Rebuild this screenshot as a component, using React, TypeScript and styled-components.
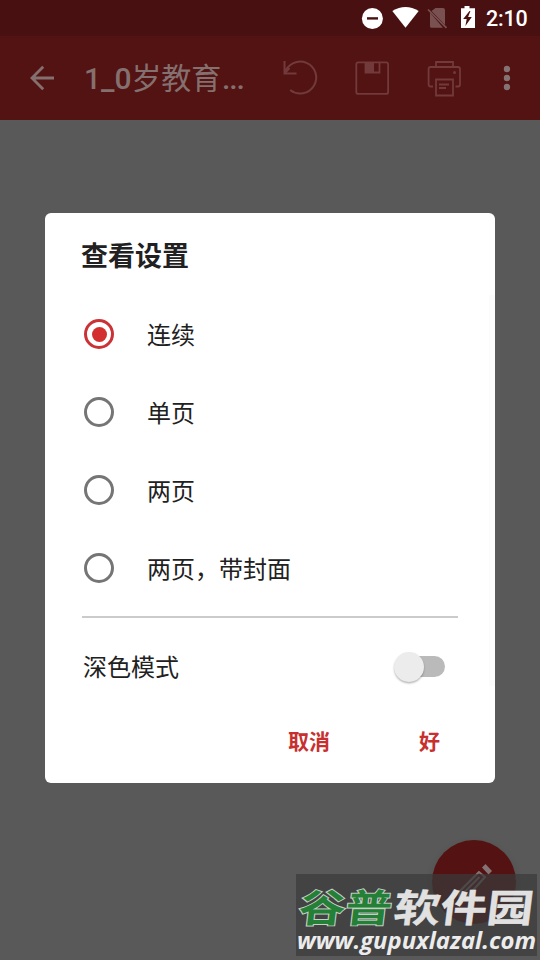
import React, { useState } from "react";
import styled, { createGlobalStyle } from "styled-components";

const GlobalStyle = createGlobalStyle`
  * { box-sizing: border-box; }
  body { margin: 0; background: #595959; overflow: hidden; }
`;

const Screen = styled.div`
  position: relative;
  display: flex;
  flex-direction: column;
  width: 540px;
  height: 960px;
  overflow: hidden;
  background: #595959;
  font-family: Roboto, "Noto Sans CJK SC", sans-serif;
`;

const StatusBar = styled.header`
  display: flex;
  align-items: center;
  justify-content: flex-end;
  height: 36px;
  padding-right: 12px;
  background: #481010;
`;

const Clock = styled.span`
  margin-left: 10px;
  width: 42px;
  padding-top: 2px;
  color: #fff;
  font-size: 21.5px;
  font-weight: 500;
  line-height: 36px;
  letter-spacing: -0.2px;
  white-space: nowrap;
`;

const AppBar = styled.div`
  display: flex;
  align-items: center;
  height: 84px;
  background: #531313;
`;

const IconButton = styled.button<{ $width: number }>`
  flex: none;
  width: ${(p) => p.$width}px;
  height: 84px;
  padding: 0;
  border: 0;
  background: none;

  svg { display: block; }
`;

const DocTitle = styled.h1`
  flex: none;
  width: 180px;
  margin: 0;
  padding-top: 2px;
  color: #857070;
  font-size: 30px;
  font-weight: 500;
  line-height: 84px;
  white-space: nowrap;
`;

const TitleHan = styled.span`
  font-weight: 400;
  font-size: 30px;
  letter-spacing: -0.2px;
`;

const Ellipsis = styled.span`
  margin-left: 1px;
  letter-spacing: -1px;
`;

const Workspace = styled.main`
  flex: 1;
  display: flex;
  flex-direction: column;
  align-items: center;
  padding-top: 93px;
`;

const Dialog = styled.section`
  position: relative;
  display: flex;
  flex-direction: column;
  width: 450px;
  height: 570px;
  padding: 0 37px;
  border-radius: 6px;
  background: #fff;
  color: #212121;
`;

const DialogTitle = styled.h2`
  margin: 0 0 0 -1px;
  height: 82px;
  font-size: 27px;
  font-weight: 700;
  line-height: 88px;
`;

const Option = styled.label`
  display: flex;
  align-items: center;
  gap: 33px;
  height: 78px;
  padding-left: 2px;
  font-size: 24px;
`;

const OptionText = styled.span`
  padding-bottom: 2px;
`;

const Radio = styled.span<{ $checked: boolean }>`
  display: flex;
  align-items: center;
  justify-content: center;
  width: 30px;
  height: 30px;
  border: 3px solid ${(p) => (p.$checked ? "#cb3235" : "#757575")};
  border-radius: 50%;

  &::after {
    content: "";
    width: 15px;
    height: 15px;
    border-radius: 50%;
    background: ${(p) => (p.$checked ? "#d32f2f" : "transparent")};
  }
`;

const Divider = styled.hr`
  flex: none;
  width: 376px;
  height: 2px;
  margin: 9px 0 0;
  border: 0;
  background: #cbcbcb;
`;

const SwitchRow = styled.div`
  display: flex;
  align-items: center;
  justify-content: space-between;
  height: 97px;
  padding: 0 13px 0 1px;
  font-size: 24px;
`;

const Track = styled.button`
  display: flex;
  align-items: center;
  justify-content: flex-start;
  width: 48px;
  height: 21px;
  padding: 0;
  border: 0;
  border-radius: 11px;
  background: #bababa;
`;

const Thumb = styled.span`
  flex: none;
  width: 30px;
  height: 30px;
  margin-left: -3px;
  border-radius: 50%;
  background: #ececec;
  box-shadow: 0 1.5px 2px rgba(0, 0, 0, 0.28);
`;

const Actions = styled.div`
  display: flex;
  justify-content: flex-end;
  gap: 89px;
  padding: 11px 18px 0 0;
`;

const TextButton = styled.button`
  padding: 0;
  border: 0;
  background: none;
  color: #c8302f;
  font-family: inherit;
  font-size: 21px;
  font-weight: 700;
  line-height: 32px;
`;

const ScrollThumb = styled.div`
  position: absolute;
  top: 82px;
  right: 0;
  width: 6px;
  height: 391px;
  background: #fcfcfc;
`;

const Fab = styled.button`
  position: absolute;
  left: 432px;
  top: 840px;
  width: 84px;
  height: 84px;
  padding: 0;
  border: 0;
  border-radius: 50%;
  background: #541212;
  box-shadow: 0 4px 8px rgba(0, 0, 0, 0.12);

  svg { display: block; }
`;

const Watermark = styled.div`
  position: absolute;
  left: 296px;
  top: 874px;
  width: 241px;
  height: 82px;
  background: rgba(59, 59, 59, 0.73);
  white-space: nowrap;
`;

const SiteName = styled.svg`
  display: block;
  width: 241px;
  height: 82px;
  overflow: visible;
`;

const BackIcon = () => (
  <svg width="84" height="84" fill="none" stroke="#857070" strokeWidth="2.8">
    <path d="M54 42H32M43.2 30.8 32 42l11.2 11.2" />
  </svg>
);

const UndoIcon = () => (
  <svg width="72" height="84" fill="none" stroke="#723a3a" strokeWidth="2">
    <path d="M20.500 25v12.500H32.500M20.800 37.200A16 16 0 1 1 26.200 54" />
    <path d="m20.500 37.500 5-5.500" />
  </svg>
);

const SaveIcon = () => (
  <svg width="72" height="84" fill="none" stroke="#723a3a" strokeWidth="1.800">
    <rect x="20.300" y="26.300" width="31.800" height="31.600" rx="2" />
    <path d="M29.500 26.500v10h14v-10" />
    <path d="M29 26h9v11h-9z" fill="#723a3a" stroke="none" />
  </svg>
);

const PrintIcon = () => (
  <svg width="72" height="84" fill="none" stroke="#723a3a" strokeWidth="1.800">
    <path d="M28 31v-5h17v5M25 50.500h-2.500a2 2 0 0 1-1.900-2V33a2 2 0 0 1 2-2H50a2 2 0 0 1 2 2v15.500a2 2 0 0 1-2 2h-2.500" />
    <path d="M28 43.500h17v16H28zM31 48.500h10M31 52h7" />
    <circle cx="46.500" cy="36.500" r="1.500" fill="#723a3a" stroke="none" />
  </svg>
);

const MoreIcon = () => (
  <svg width="68" height="84" fill="#857373">
    <circle cx="35" cy="33" r="3.200" />
    <circle cx="35" cy="42" r="3.200" />
    <circle cx="35" cy="51" r="3.200" />
  </svg>
);

const StatusIcons = () => (
  <svg width="116" height="36" fill="#fff">
    <circle cx="12.400" cy="18.500" r="10.500" />
    <path d="M7 17.200h11v2.400H7z" fill="#481010" />
    <path d="M32.300 11Q45.500 3.200 58.700 11L45.500 27.700z" />
    <path d="M75.500 8H83a2 2 0 0 1 2 2v15L71.500 11zM70 12.500v13.800a1.500 1.500 0 0 0 1.500 1.500H83z" fill="#795151" />
    <path d="m68 9.500 18.500 18.300" stroke="#795151" strokeWidth="1.700" />
    <path d="M101 8.300h3.500V6h5v2.300h5.500V28h-14z" />
    <path d="m109.500 11-6.300 8h3.500l-1.300 7 6.400-9h-3.700l2.300-6z" fill="#481010" />
  </svg>
);

const PencilIcon = () => (
  <svg width="84" height="84" fill="none" stroke="#857373" strokeWidth="2">
    <path d="M47 32 27.500 51.500v6.500h6.500L53 37zM47.500 37 32 52.500" />
    <path d="m53.500 24 6.500 7-3.500 3.500-6.500-7z" fill="#857373" stroke="none" />
  </svg>
);

const modes = ["连续", "单页", "两页", "两页，带封面"];

export default function App() {
  const [mode, setMode] = useState(0);

  return (
    <>
      <GlobalStyle />
      <Screen>
        <StatusBar>
          <StatusIcons />
          <Clock>2:10</Clock>
        </StatusBar>
        <AppBar>
          <IconButton $width={84} aria-label="返回"><BackIcon /></IconButton>
          <DocTitle>1_0<TitleHan>岁教育</TitleHan><Ellipsis>...</Ellipsis></DocTitle>
          <IconButton $width={72} aria-label="撤销"><UndoIcon /></IconButton>
          <IconButton $width={72} aria-label="保存"><SaveIcon /></IconButton>
          <IconButton $width={64} aria-label="打印"><PrintIcon /></IconButton>
          <IconButton $width={68} aria-label="更多"><MoreIcon /></IconButton>
        </AppBar>
        <Workspace>
          <Dialog>
            <DialogTitle>查看设置</DialogTitle>
            {modes.map((name, i) => (
              <Option key={name} onClick={() => setMode(i)}>
                <Radio $checked={mode === i} />
                <OptionText>{name}</OptionText>
              </Option>
            ))}
            <Divider />
            <SwitchRow>
              <OptionText>深色模式</OptionText>
              <Track aria-label="深色模式"><Thumb /></Track>
            </SwitchRow>
            <Actions>
              <TextButton>取消</TextButton>
              <TextButton>好</TextButton>
            </Actions>
            <ScrollThumb />
          </Dialog>
        </Workspace>
        <Fab aria-label="编辑"><PencilIcon /></Fab>
        <Watermark>
          <SiteName>
            <g
              fontFamily='"Noto Sans CJK SC", sans-serif'
              fontWeight="700"
              fontSize="40"
              transform="translate(1.500 47.500) skewX(-7) scale(1.160 0.960)"
            >
              <text fill="#248036" stroke="#c5d0c5" strokeWidth="2" paintOrder="stroke" textLength="80">谷普</text>
              <text x="82" fill="#ececec" fillOpacity="0.95" stroke="#ececec" strokeWidth="0.400" textLength="120">软件园</text>
            </g>
            <text
              x="1"
              y="75"
              fill="#ececec"
              fontFamily='"Open Sans", sans-serif'
              fontWeight="700"
              fontStyle="italic"
              fontSize="23.500"
              textLength="239"
              lengthAdjust="spacingAndGlyphs"
            >
              www.gupuxlazal.com
            </text>
          </SiteName>
        </Watermark>
      </Screen>
    </>
  );
}
